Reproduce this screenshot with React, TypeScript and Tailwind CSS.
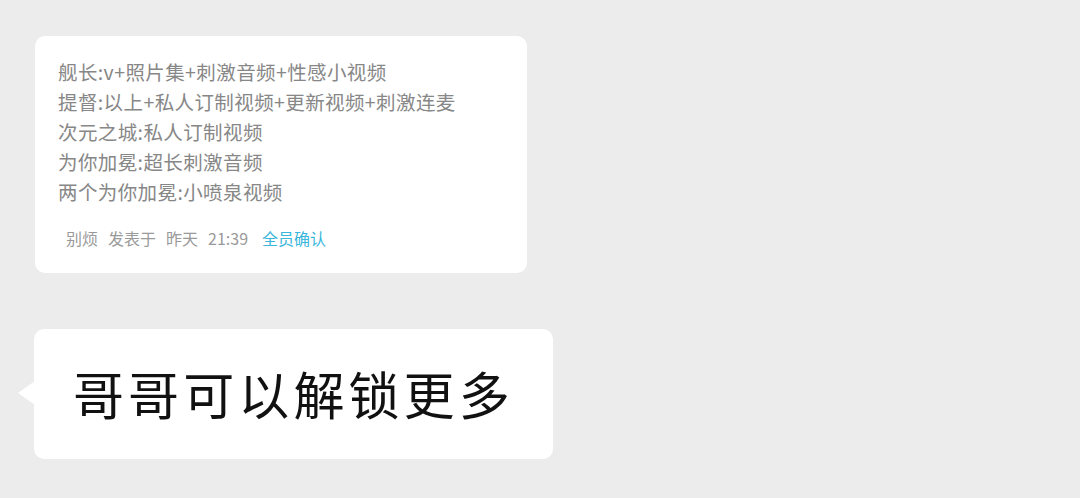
export default function App() {
  const lines = [
    "舰长:v+照片集+刺激音频+性感小视频",
    "提督:以上+私人订制视频+更新视频+刺激连麦",
    "次元之城:私人订制视频",
    "为你加冕:超长刺激音频",
    "两个为你加冕:小喷泉视频",
  ];

  return (
    <div
      className="w-[1080px] h-[498px] bg-[#ececec] overflow-hidden pt-[36px]"
      style={{ fontFamily: '"Noto Sans CJK SC", "Noto Sans", sans-serif' }}
    >
      {/* Post card */}
      <div className="ml-[35px] w-[492px] h-[237px] bg-white rounded-[10px] pt-[21px] pl-[23px]">
        <div className="flex flex-col">
          {lines.map((line) => (
            <div key={line} className="text-[19.5px] leading-[30px] text-[#878787] tracking-[0.4px]">
              {line}
            </div>
          ))}
        </div>
        <div className="mt-[21px] ml-[8px] flex items-center gap-[10px] text-[16px] leading-[20px] text-[#9a9a9a]">
          <span>别烦</span>
          <span>发表于</span>
          <span>昨天</span>
          <span>21:39</span>
          <span className="ml-[4px] text-[#3bb6dc]">全员确认</span>
        </div>
      </div>

      {/* Chat bubble */}
      <div className="relative ml-[34px] mt-[56px] w-[519px] h-[130px] bg-white rounded-[10px] flex items-center pl-[39px]">
        <div className="absolute left-[-16px] top-[52px] w-0 h-0 border-y-[12px] border-y-transparent border-r-[17px] border-r-white" />
        <span className="relative text-[51px] leading-none text-[#111111] tracking-[4.1px] pb-[2px]">
          哥哥可以解锁更多
        </span>
      </div>
    </div>
  );
}
